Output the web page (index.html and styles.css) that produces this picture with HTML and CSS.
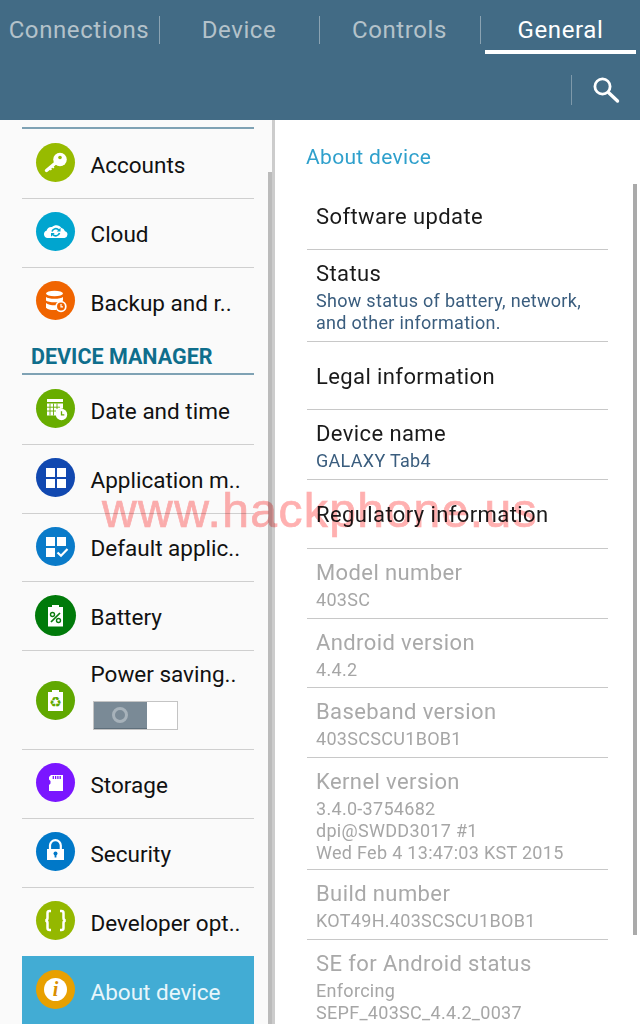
FILE: index.html
```html
<!DOCTYPE html>
<html lang="en">
<head>
<meta charset="utf-8">
<title>Settings</title>
<link rel="stylesheet" href="styles.css">
</head>
<body>
<div class="screen">
  <header class="top">
    <nav class="tabs">
      <div class="tab">Connections</div><span class="sep"></span>
      <div class="tab">Device</div><span class="sep"></span>
      <div class="tab tab-wide">Controls</div><span class="sep"></span>
      <div class="tab tab-on">General</div>
    </nav>
    <div class="actions">
      <span class="sep-search"></span>
      <svg class="search" viewBox="0 0 27 27"><circle cx="9.500" cy="9.500" r="7.600" fill="none" stroke="#fff" stroke-width="2.800"/><path d="M15.500 15.500l9 8.500" stroke="#fff" stroke-width="3.400" stroke-linecap="round"/></svg>
    </div>
  </header>
  <main class="body">
    <aside class="side">
      <div class="rule first"></div>
      <div class="item"><span class="ic c-acc"><svg viewBox="0 0 39 39"><circle cx="24" cy="16.500" r="6.800" fill="#fff"/><path d="M19.500 20L10.500 27.500" stroke="#fff" stroke-width="3.400" stroke-linecap="round"/><path d="M13.500 25l1.800 2M16 23l1.800 2" stroke="#fff" stroke-width="1.800"/><circle cx="24" cy="14.500" r="1.800" fill="#97bb00"/></svg></span><span class="lbl">Accounts</span></div>
      <div class="item"><span class="ic c-cloud"><svg viewBox="0 0 39 39"><path d="M11.500 26a3.700 3.700 0 0 1-1-7.200 5.200 5.200 0 0 1 5.500-3.800c2.500-2.600 7.500-2.600 9.200.8a5.200 5.200 0 0 1 3.800 3.400 3.500 3.500 0 0 1-.5 6.800z" fill="#fff"/><path d="M16 19.500a4 4 0 0 1 6.800-1.500M23.500 21a4 4 0 0 1-6.800 1.500" fill="none" stroke="#00a5cf" stroke-width="1.700"/><path d="M24.500 15.800v3.700H20.800zM15 24.700V21h3.700z" fill="#00a5cf"/></svg></span><span class="lbl">Cloud</span></div>
      <div class="item last"><span class="ic c-back"><svg viewBox="0 0 39 39"><ellipse cx="18.500" cy="12.500" rx="8.500" ry="2.800" fill="#fff"/><path d="M10 16c2 2.400 15 2.400 17 0v3.500c-2 2.400-15 2.400-17 0zM10 22c2 2.200 8 2.600 10.500 2.200l-.5 4.800c-4 .4-8.500-.4-10-2.200z" fill="#fff"/><circle cx="25" cy="25.500" r="4.800" fill="#f06400" stroke="#fff" stroke-width="1.700"/><path d="M25 23v2.800h2" fill="none" stroke="#fff" stroke-width="1.200"/></svg></span><span class="lbl">Backup and r..</span></div>

      <div class="group">DEVICE MANAGER</div>
      <div class="rule"></div>

      <div class="item"><span class="ic c-date"><svg viewBox="0 0 39 39"><path d="M11 10h16v3H11z" fill="#fff"/><path d="M11 14.500h16v5a7 7 0 0 0-7 7h-9z" fill="#fff"/><path d="M14 14.500V26.500M17.500 14.500V26.500M21 14.500V20M11 18.200h13M11 22h9" stroke="#68ad00" stroke-width=".9"/><circle cx="25.500" cy="25.500" r="5.700" fill="#fff"/><path d="M25.500 22.300v3.500h2.800" fill="none" stroke="#68ad00" stroke-width="1.300"/></svg></span><span class="lbl">Date and time</span></div>
      <div class="item"><span class="ic c-app"><svg viewBox="0 0 39 39"><path d="M10 10h9v9h-9zM21 10h9v9h-9zM10 21h9v9h-9zM21 21h9v9h-9z" fill="#fff"/></svg></span><span class="lbl">Application m..</span></div>
      <div class="item"><span class="ic c-def"><svg viewBox="0 0 39 39"><path d="M10 10h9v9h-9zM21 10h9v9h-9zM10 21h9v9h-9z" fill="#fff"/><path d="M21.500 25.500l3.500 3.300 6.500-6.800" fill="none" stroke="#fff" stroke-width="2.200"/></svg></span><span class="lbl">Default applic..</span></div>
      <div class="item"><span class="ic c-bat"><svg viewBox="0 0 41 41"><path d="M17 10h7v2h4v19.500H13V12h4z" fill="#fff"/><path d="M16 27l9-9" stroke="#0a7a10" stroke-width="1.700"/><circle cx="17.500" cy="19.500" r="2" fill="none" stroke="#0a7a10" stroke-width="1.400"/><circle cx="23.500" cy="25.500" r="2" fill="none" stroke="#0a7a10" stroke-width="1.400"/></svg></span><span class="lbl">Battery</span></div>
      <div class="item power"><span class="ic c-pow"><svg viewBox="0 0 39 39"><path d="M16 9h7v2h4v19H12V11h4z" fill="#fff"/><text class="recycle" x="19.500" y="26" text-anchor="middle">♻</text></svg></span>
        <div class="pow-text"><span class="lbl">Power saving..</span>
          <div class="switch"><span class="sw-off"><span class="ring"></span></span><span class="sw-on"></span></div>
        </div></div>
      <div class="item"><span class="ic c-sto"><svg viewBox="0 0 39 39"><path d="M15 12h12v16H13v-6l1.500-1.500V18L13 16.500V14z" fill="#fff"/><path d="M17.300 13v3M19.600 13v3M21.900 13v3M24.200 13v3" stroke="#7a16ff" stroke-width="1.300"/></svg></span><span class="lbl">Storage</span></div>
      <div class="item"><span class="ic c-sec"><svg viewBox="0 0 39 39"><path d="M14 17v-3.500a5.400 5.400 0 0 1 10.800 0V17" fill="none" stroke="#fff" stroke-width="2.200"/><path d="M11 17h17v11H11z" fill="#fff"/><circle cx="19.500" cy="21.500" r="2" fill="#0078c8"/><path d="M19.500 22v3.500" stroke="#0078c8" stroke-width="1.800"/></svg></span><span class="lbl">Security</span></div>
      <div class="item last"><span class="ic c-dev"><svg viewBox="0 0 39 39"><path d="M15 10h-1.500a2 2 0 0 0-2 2v5a2.500 2.500 0 0 1-2 2.500 2.500 2.500 0 0 1 2 2.500v5a2 2 0 0 0 2 2H15M24 10h1.500a2 2 0 0 1 2 2v5a2.500 2.500 0 0 0 2 2.500 2.500 2.500 0 0 0-2 2.500v5a2 2 0 0 1-2 2H24" fill="none" stroke="#fff" stroke-width="2.500"/></svg></span><span class="lbl">Developer opt..</span></div>
      <div class="item active"><span class="ic c-abt"><span class="i-disc">i</span></span><span class="lbl">About device</span></div>
      <div class="scroll-l"></div>
    </aside>

    <section class="detail">
      <h2 class="title">About device</h2>
      <div class="row one first-row"><div class="t">Software update</div></div>
      <div class="row tall"><div class="t">Status</div><div class="s">Show status of battery, network,<br>and other information.</div></div>
      <div class="row one legal"><div class="t">Legal information</div></div>
      <div class="row"><div class="t">Device name</div><div class="s">GALAXY Tab4</div></div>
      <div class="row one reg"><div class="t">Regulatory information</div></div>
      <div class="row off"><div class="t">Model number</div><div class="s">403SC</div></div>
      <div class="row off"><div class="t">Android version</div><div class="s">4.4.2</div></div>
      <div class="row off"><div class="t">Baseband version</div><div class="s">403SCSCU1BOB1</div></div>
      <div class="row off kernel"><div class="t">Kernel version</div><div class="s">3.4.0-3754682<br>dpi@SWDD3017 #1<br>Wed Feb 4 13:47:03 KST 2015</div></div>
      <div class="row off"><div class="t">Build number</div><div class="s">KOT49H.403SCSCU1BOB1</div></div>
      <div class="row off tall"><div class="t">SE for Android status</div><div class="s">Enforcing<br>SEPF_403SC_4.4.2_0037</div></div>
      <div class="scroll-r"></div>
    </section>
  </main>
  <div class="mark">www.hackphone.us</div>
</div>
</body>
</html>
```
FILE: styles.css
```css
* { box-sizing: border-box; }
html, body { margin: 0; padding: 0; background: #fff; }
.screen { position: relative; width: 640px; height: 1024px; overflow: hidden; font-family: Roboto, "Liberation Sans", sans-serif; filter: blur(.35px); }

.top { height: 120px; background: #426b85; }
.tabs { display: flex; height: 60px; align-items: flex-start; }
.tab { flex: none; width: 159px; height: 60px; padding-right: 1px; line-height: 60px; text-align: center; font-size: 24px; letter-spacing: .6px; color: #b4c2ca; }
.tab-wide { width: 160px; }
.tab-on { width: 151px; margin: 0 4px; height: 54px; padding-right: 0; color: #fff; border-bottom: 4px solid #fff; }
.sep { width: 1px; height: 28px; margin-top: 16px; background: #8ba3b2; }
.actions { height: 60px; display: flex; justify-content: flex-end; align-items: center; padding-right: 20px; }
.sep-search { width: 1px; height: 30px; background: #7e99aa; margin-right: 21px; }
.search { width: 27px; height: 27px; }

.body { display: flex; height: 904px; }
.side { position: relative; width: 275px; flex: none; padding: 7px 0 0 22px; background: #fafafa; border-right: 3px solid #ccc; overflow: hidden; }
.rule { width: 232px; height: 2px; margin-bottom: 1px; background: #7fa2b4; }
.item { width: 232px; height: 68.750px; display: flex; align-items: center; padding-left: 14px; border-bottom: 1px solid #cfcfcf; }
.item.last { border-bottom: 0; }
.lbl { margin: 2px 0 0 15.500px; font-size: 22.500px; color: #111; white-space: nowrap; }
.ic { flex: none; width: 39px; height: 39px; border-radius: 50%; display: flex; align-items: center; justify-content: center; margin-top: -2px; }
.ic svg { width: 100%; height: 100%; display: block; }
.c-acc { background: #97bb00; }
.c-cloud { background: #00a5cf; }
.c-back { background: #f06400; }
.c-date { background: #68ad00; }
.c-app { background: #1148b0; }
.c-def { background: #0a7bc9; }
.c-bat { background: #007a0a; width: 41px; height: 41px; margin-left: -1px; margin-right: -1px; }
.c-pow { background: #60a800; }
.c-sto { background: #7a16ff; }
.c-sec { background: #0078c8; }
.c-dev { background: #94b800; }
.c-abt { background: #e8a000; }
.recycle { font: 14px "DejaVu Sans", sans-serif; fill: #60a800; }
.i-disc { width: 23px; height: 23px; border-radius: 50%; background: #fff; color: #d98e00; font: italic 700 20px/23px "Liberation Serif", serif; text-align: center; }

.group { height: 36.750px; padding: 11px 0 0 9px; font-size: 21.500px; line-height: 20px; font-weight: 700; color: #0f6e8c; white-space: nowrap; }
.power { height: 99px; }
.power .ic { margin-top: 0; }
.pow-text { align-self: flex-start; display: flex; flex-direction: column; margin-left: 15.500px; padding-top: 9px; }
.power .lbl { margin: 0; line-height: 28px; }
.switch { display: flex; width: 85px; height: 29px; margin: 13px 0 0 2px; border: 1px solid #c4c4c4; }
.sw-off { width: 53px; background: #7a8a96; border-bottom: 1px solid #5f6f7b; display: flex; align-items: center; justify-content: center; }
.sw-on { flex: 1; background: #fff; }
.ring { width: 16px; height: 16px; border: 3px solid #a7b2ba; border-radius: 50%; }
.active { background: #42acd4; border-bottom: 0; }
.active .lbl { color: #e8f6fb; }
.scroll-l { position: absolute; left: 268px; top: 52px; bottom: 0; width: 4px; background: #bbb; }

.detail { position: relative; flex: 1; padding-left: 32px; }
.title { margin: 0 0 0 -1px; height: 61px; padding: 22px 0 0 0; font-size: 21px; letter-spacing: .33px; line-height: 30px; font-weight: 400; color: #2fa0cc; }
.row { width: 301px; height: 69.500px; padding: 9px 0 0 9px; border-bottom: 1px solid #c8c8c8; }
.row.one { display: flex; align-items: center; padding-top: 2px; }
.row.first-row, .row.reg { padding-top: 3px; }
.row.first-row { height: 69px; }
.row.tall { height: 92px; }
.row.legal { height: 68px; }
.row.kernel { height: 112.500px; }
.t { font-size: 22px; letter-spacing: .4px; line-height: 30px; color: #1a1a1a; white-space: nowrap; }
.s { margin-top: 1px; font-size: 18px; letter-spacing: .3px; line-height: 22px; color: #3a5d7e; white-space: nowrap; }
.off .t, .off .s { color: #a9a9a9; }
.off .s { color: #a6a6a6; }
.scroll-r { position: absolute; left: 358px; top: 64px; width: 4px; height: 751px; background: #aaa; }

.mark { position: absolute; left: 102px; top: 484px; font: 48px/54px "Liberation Sans", sans-serif; letter-spacing: 1.4px; color: #ffb0b0; -webkit-text-stroke: .7px #ffb0b0; mix-blend-mode: multiply; white-space: nowrap; }
```
